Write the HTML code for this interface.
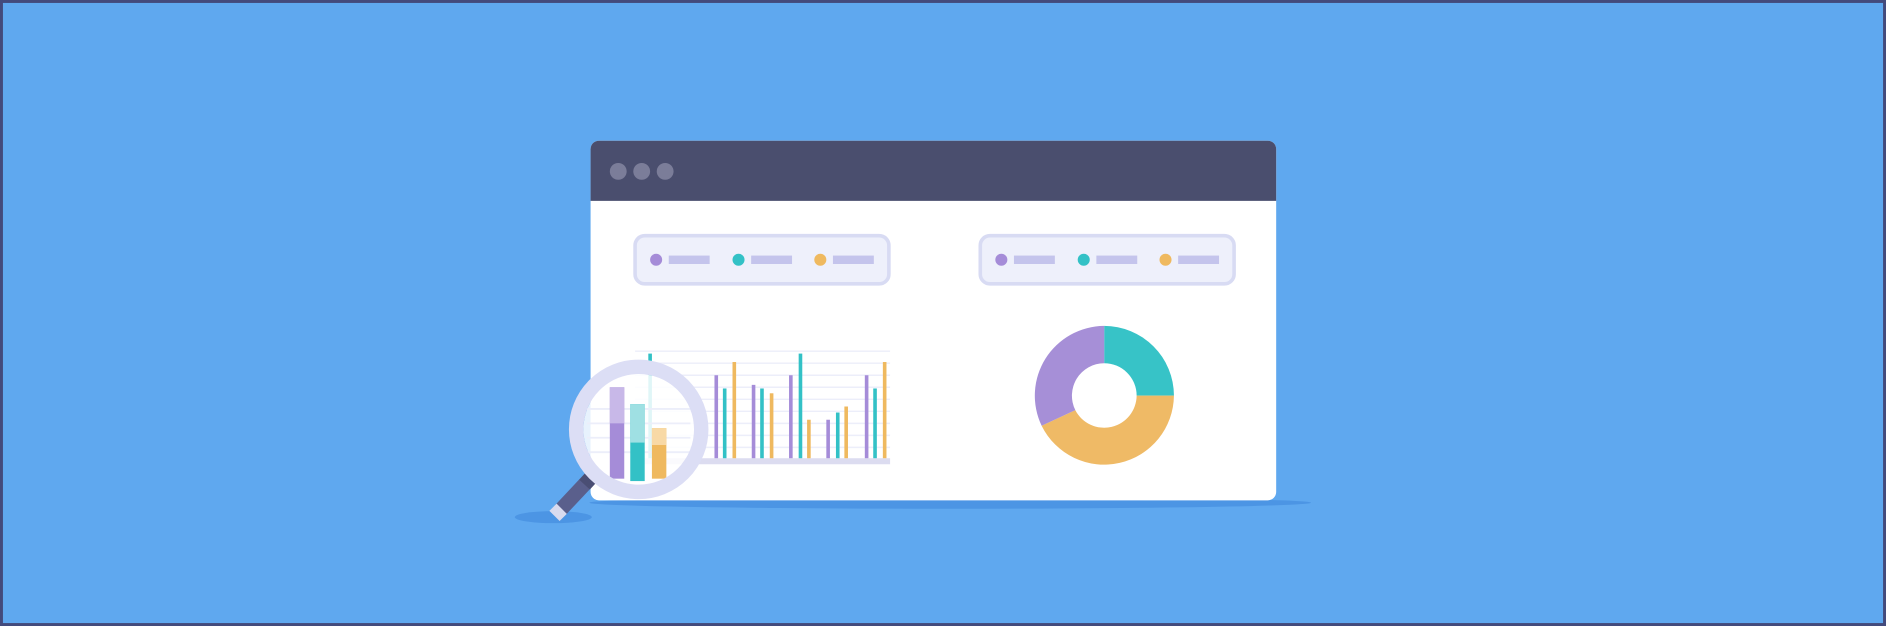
<!DOCTYPE html>
<html><head><meta charset="utf-8"><style>
html,body{margin:0;padding:0;width:1886px;height:626px;overflow:hidden;background:#5fa8ef}
svg{display:block}
</style></head><body>
<svg width="1886" height="626" viewBox="0 0 1568 520.5" preserveAspectRatio="none" xmlns="http://www.w3.org/2000/svg">
<rect x="0" y="0" width="1568" height="520.5" fill="#5fa8ef"/>
<rect x="1.2" y="1.2" width="1565.6" height="518.1" fill="none" stroke="#434a7c" stroke-width="2.5"/>
<ellipse cx="790" cy="418" rx="300" ry="5" fill="#4c95e4"/>
<ellipse cx="460" cy="430" rx="32" ry="5" fill="#4c95e4"/>
<rect x="491" y="117" width="570" height="299" rx="7" fill="#ffffff"/>
<path d="M491 167 V124 a7 7 0 0 1 7 -7 H1054 a7 7 0 0 1 7 7 V167 Z" fill="#4a4e6e"/>
<circle cx="514" cy="142.5" r="7" fill="#7b7d99"/>
<circle cx="533.5" cy="142.5" r="7" fill="#7b7d99"/>
<circle cx="553" cy="142.5" r="7" fill="#7b7d99"/>
<g>
<rect x="528" y="196" width="211" height="40" rx="8" fill="#eef0fb" stroke="#d8dbf3" stroke-width="3"/>
<circle cx="545.5" cy="216" r="5" fill="#a58cd8"/><rect x="556" y="212.5" width="34" height="7" fill="#c4c4ec"/>
<circle cx="614" cy="216" r="5" fill="#33c1c6"/><rect x="624.5" y="212.5" width="34" height="7" fill="#c4c4ec"/>
<circle cx="682" cy="216" r="5" fill="#efb95f"/><rect x="692.5" y="212.5" width="34" height="7" fill="#c4c4ec"/>
</g>
<g transform="translate(287,0)">
<rect x="528" y="196" width="211" height="40" rx="8" fill="#eef0fb" stroke="#d8dbf3" stroke-width="3"/>
<circle cx="545.5" cy="216" r="5" fill="#a58cd8"/><rect x="556" y="212.5" width="34" height="7" fill="#c4c4ec"/>
<circle cx="614" cy="216" r="5" fill="#33c1c6"/><rect x="624.5" y="212.5" width="34" height="7" fill="#c4c4ec"/>
<circle cx="682" cy="216" r="5" fill="#efb95f"/><rect x="692.5" y="212.5" width="34" height="7" fill="#c4c4ec"/>
</g>
<g stroke="#eceefa" stroke-width="1.2">
<line x1="528" y1="292" x2="740" y2="292"/><line x1="528" y1="302" x2="740" y2="302"/>
<line x1="528" y1="312" x2="740" y2="312"/><line x1="528" y1="322" x2="740" y2="322"/>
<line x1="528" y1="332" x2="740" y2="332"/><line x1="528" y1="342" x2="740" y2="342"/>
<line x1="528" y1="352" x2="740" y2="352"/><line x1="528" y1="362" x2="740" y2="362"/>
<line x1="528" y1="372" x2="740" y2="372"/>
</g>
<rect x="528" y="381" width="212" height="5" fill="#dcdcf0"/>
<g>
<rect x="539" y="294" width="3" height="87" fill="#33c1c6"/>
<rect x="594" y="312" width="3" height="69" fill="#a58cd8"/>
<rect x="601" y="323" width="3" height="58" fill="#33c1c6"/>
<rect x="609" y="301" width="3" height="80" fill="#efb95f"/>
<rect x="625" y="320" width="3" height="61" fill="#a58cd8"/>
<rect x="632" y="323" width="3" height="58" fill="#33c1c6"/>
<rect x="640" y="327" width="3" height="54" fill="#efb95f"/>
<rect x="656" y="312" width="3" height="69" fill="#a58cd8"/>
<rect x="664" y="294" width="3" height="87" fill="#33c1c6"/>
<rect x="671" y="349" width="3" height="32" fill="#efb95f"/>
<rect x="687" y="349" width="3" height="32" fill="#a58cd8"/>
<rect x="695" y="343" width="3" height="38" fill="#33c1c6"/>
<rect x="702" y="338" width="3" height="43" fill="#efb95f"/>
<rect x="719" y="312" width="3" height="69" fill="#a58cd8"/>
<rect x="726" y="323" width="3" height="58" fill="#33c1c6"/>
<rect x="734" y="301" width="3" height="80" fill="#efb95f"/>
</g>
<g transform="translate(918,329)">
<path d="M0 -58 A58 58 0 0 1 58 0 L27 0 A27 27 0 0 0 0 -27 Z" fill="#37c3c7"/>
<path d="M58 0 A58 58 0 0 1 -52 25 L-24 12 A27 27 0 0 0 27 0 Z" fill="#efba66"/>
<path d="M-52 25 A58 58 0 0 1 0 -58 L0 -27 A27 27 0 0 0 -24 12 Z" fill="#a68fd7"/>
</g>
<g>
<path d="M497 391 L466 424" stroke="#5a5f8c" stroke-width="12"/>
<path d="M497 391 L486 403" stroke="#4a4e74" stroke-width="12"/>
<path d="M467 423 L461 429" stroke="#d9dbef" stroke-width="12"/>
<circle cx="531" cy="357" r="46" fill="#ffffff" fill-opacity="0.85"/>
<g stroke="#eceefa" stroke-width="1.5">
<line x1="488" y1="340" x2="574" y2="340"/><line x1="488" y1="352" x2="574" y2="352"/>
<line x1="488" y1="364" x2="574" y2="364"/><line x1="488" y1="376" x2="574" y2="376"/>
</g>
<rect x="507" y="322" width="12" height="76" fill="#a58cd8"/>
<rect x="507" y="322" width="12" height="30" fill="#c8b8e8"/>
<rect x="524" y="336" width="12" height="64" fill="#33c1c6"/>
<rect x="524" y="336" width="12" height="32" fill="#9fe0e3"/>
<rect x="542" y="356" width="12" height="42" fill="#efb95f"/>
<rect x="542" y="356" width="12" height="14" fill="#f8d9a6"/>
<circle cx="531" cy="357" r="52" fill="none" stroke="#dcdef5" stroke-width="12"/>
</g>
</svg>
</body></html>
